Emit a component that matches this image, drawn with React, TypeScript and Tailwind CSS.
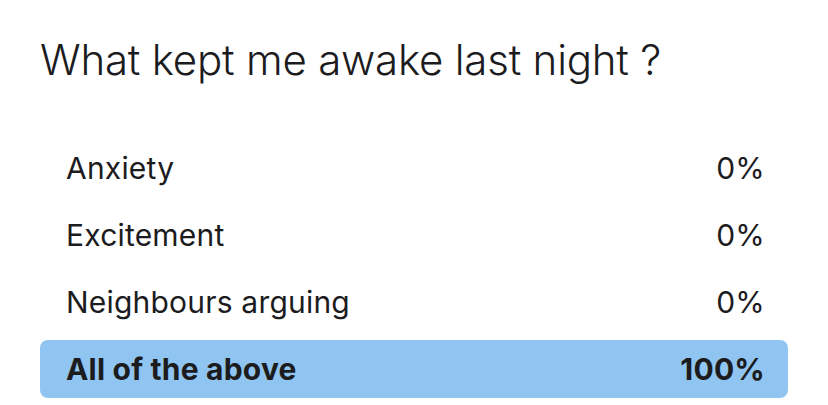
const options = [
  { label: 'Anxiety', percent: 0 },
  { label: 'Excitement', percent: 0 },
  { label: 'Neighbours arguing', percent: 0 },
  { label: 'All of the above', percent: 100 },
];

export default function App() {
  const top = Math.max(...options.map((o) => o.percent));

  return (
    <div
      className="min-h-screen bg-white px-[40px] pt-[35px] text-[#1c1c1e]"
      style={{ fontFamily: 'Inter, "Noto Sans", sans-serif' }}
    >
      <h1 className="text-[42px] font-light leading-[50px] tracking-[-0.2px]">
        What kept me awake last night ?
      </h1>

      <div className="mt-[54px] flex flex-col gap-[9px]">
        {options.map((option) => {
          const winner = option.percent === top;
          return (
            <div
              key={option.label}
              className={
                winner
                  ? 'flex h-[58px] items-center justify-between rounded-[8px] bg-[#90c5f1] pl-[26px] pr-[23px] text-[30px] font-bold tracking-[0.2px]'
                  : 'flex h-[58px] items-center justify-between rounded-[8px] pl-[26px] pr-[23px] text-[30px] tracking-[0.2px]'
              }
            >
              <span>{option.label}</span>
              <span>{option.percent}%</span>
            </div>
          );
        })}
      </div>
    </div>
  );
}
